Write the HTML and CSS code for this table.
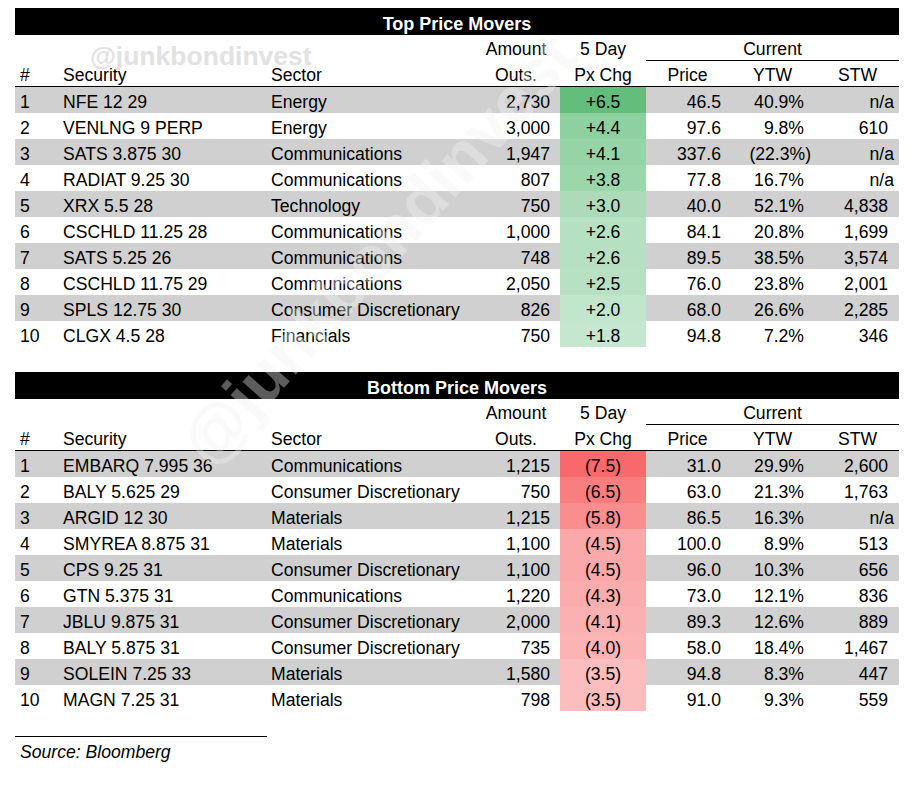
FILE: index.html
```html
<!DOCTYPE html>
<html lang="en">
<head>
<meta charset="utf-8">
<title>Price Movers</title>
<link rel="stylesheet" href="styles.css">
</head>
<body>
<div class="page">
  <section class="movers">
    <div class="title">Top Price Movers</div>
    <div class="row head1">
      <span class="cell ctr col-amt">Amount</span>
      <span class="cell ctr col-chg">5 Day</span>
      <span class="cell ctr col-cur">Current</span>
    </div>
    <div class="row head2">
      <span class="cell txt">#</span>
      <span class="cell txt">Security</span>
      <span class="cell txt">Sector</span>
      <span class="cell ctr">Outs.</span>
      <span class="cell ctr">Px Chg</span>
      <span class="cell ctr">Price</span>
      <span class="cell ctr">YTW</span>
      <span class="cell ctr">STW</span>
    </div>
    <div class="row band"><span class="cell txt">1</span><span class="cell txt">NFE 12 29</span><span class="cell txt">Energy</span><span class="cell amt">2,730</span><span class="cell chg" style="background:#63be7b">+6.5</span><span class="cell px">46.5</span><span class="cell ytw">40.9%</span><span class="cell stw na">n/a</span></div>
    <div class="row"><span class="cell txt">2</span><span class="cell txt">VENLNG 9 PERP</span><span class="cell txt">Energy</span><span class="cell amt">3,000</span><span class="cell chg" style="background:#8fd0a0">+4.4</span><span class="cell px">97.6</span><span class="cell ytw">9.8%</span><span class="cell stw">610</span></div>
    <div class="row band"><span class="cell txt">3</span><span class="cell txt">SATS 3.875 30</span><span class="cell txt">Communications</span><span class="cell amt">1,947</span><span class="cell chg" style="background:#96d3a6">+4.1</span><span class="cell px">337.6</span><span class="cell ytw neg">(22.3%)</span><span class="cell stw na">n/a</span></div>
    <div class="row"><span class="cell txt">4</span><span class="cell txt">RADIAT 9.25 30</span><span class="cell txt">Communications</span><span class="cell amt">807</span><span class="cell chg" style="background:#9cd6ab">+3.8</span><span class="cell px">77.8</span><span class="cell ytw">16.7%</span><span class="cell stw na">n/a</span></div>
    <div class="row band"><span class="cell txt">5</span><span class="cell txt">XRX 5.5 28</span><span class="cell txt">Technology</span><span class="cell amt">750</span><span class="cell chg" style="background:#addbb9">+3.0</span><span class="cell px">40.0</span><span class="cell ytw">52.1%</span><span class="cell stw">4,838</span></div>
    <div class="row"><span class="cell txt">6</span><span class="cell txt">CSCHLD 11.25 28</span><span class="cell txt">Communications</span><span class="cell amt">1,000</span><span class="cell chg" style="background:#b5e0c1">+2.6</span><span class="cell px">84.1</span><span class="cell ytw">20.8%</span><span class="cell stw">1,699</span></div>
    <div class="row band"><span class="cell txt">7</span><span class="cell txt">SATS 5.25 26</span><span class="cell txt">Communications</span><span class="cell amt">748</span><span class="cell chg" style="background:#b5e0c1">+2.6</span><span class="cell px">89.5</span><span class="cell ytw">38.5%</span><span class="cell stw">3,574</span></div>
    <div class="row"><span class="cell txt">8</span><span class="cell txt">CSCHLD 11.75 29</span><span class="cell txt">Communications</span><span class="cell amt">2,050</span><span class="cell chg" style="background:#b7e1c2">+2.5</span><span class="cell px">76.0</span><span class="cell ytw">23.8%</span><span class="cell stw">2,001</span></div>
    <div class="row band"><span class="cell txt">9</span><span class="cell txt">SPLS 12.75 30</span><span class="cell txt">Consumer Discretionary</span><span class="cell amt">826</span><span class="cell chg" style="background:#c2e6cb">+2.0</span><span class="cell px">68.0</span><span class="cell ytw">26.6%</span><span class="cell stw">2,285</span></div>
    <div class="row"><span class="cell txt">10</span><span class="cell txt">CLGX 4.5 28</span><span class="cell txt">Financials</span><span class="cell amt">750</span><span class="cell chg" style="background:#c6e7cf">+1.8</span><span class="cell px">94.8</span><span class="cell ytw">7.2%</span><span class="cell stw">346</span></div>
  </section>

  <section class="movers second">
    <div class="title">Bottom Price Movers</div>
    <div class="row head1">
      <span class="cell ctr col-amt">Amount</span>
      <span class="cell ctr col-chg">5 Day</span>
      <span class="cell ctr col-cur">Current</span>
    </div>
    <div class="row head2">
      <span class="cell txt">#</span>
      <span class="cell txt">Security</span>
      <span class="cell txt">Sector</span>
      <span class="cell ctr">Outs.</span>
      <span class="cell ctr">Px Chg</span>
      <span class="cell ctr">Price</span>
      <span class="cell ctr">YTW</span>
      <span class="cell ctr">STW</span>
    </div>
    <div class="row band"><span class="cell txt">1</span><span class="cell txt">EMBARQ 7.995 36</span><span class="cell txt">Communications</span><span class="cell amt">1,215</span><span class="cell chg" style="background:#f8696b">(7.5)</span><span class="cell px">31.0</span><span class="cell ytw">29.9%</span><span class="cell stw">2,600</span></div>
    <div class="row"><span class="cell txt">2</span><span class="cell txt">BALY 5.625 29</span><span class="cell txt">Consumer Discretionary</span><span class="cell amt">750</span><span class="cell chg" style="background:#f97e80">(6.5)</span><span class="cell px">63.0</span><span class="cell ytw">21.3%</span><span class="cell stw">1,763</span></div>
    <div class="row band"><span class="cell txt">3</span><span class="cell txt">ARGID 12 30</span><span class="cell txt">Materials</span><span class="cell amt">1,215</span><span class="cell chg" style="background:#fa8d8e">(5.8)</span><span class="cell px">86.5</span><span class="cell ytw">16.3%</span><span class="cell stw na">n/a</span></div>
    <div class="row"><span class="cell txt">4</span><span class="cell txt">SMYREA 8.875 31</span><span class="cell txt">Materials</span><span class="cell amt">1,100</span><span class="cell chg" style="background:#faa8a9">(4.5)</span><span class="cell px">100.0</span><span class="cell ytw">8.9%</span><span class="cell stw">513</span></div>
    <div class="row band"><span class="cell txt">5</span><span class="cell txt">CPS 9.25 31</span><span class="cell txt">Consumer Discretionary</span><span class="cell amt">1,100</span><span class="cell chg" style="background:#faa8a9">(4.5)</span><span class="cell px">96.0</span><span class="cell ytw">10.3%</span><span class="cell stw">656</span></div>
    <div class="row"><span class="cell txt">6</span><span class="cell txt">GTN 5.375 31</span><span class="cell txt">Communications</span><span class="cell amt">1,220</span><span class="cell chg" style="background:#fbacad">(4.3)</span><span class="cell px">73.0</span><span class="cell ytw">12.1%</span><span class="cell stw">836</span></div>
    <div class="row band"><span class="cell txt">7</span><span class="cell txt">JBLU 9.875 31</span><span class="cell txt">Consumer Discretionary</span><span class="cell amt">2,000</span><span class="cell chg" style="background:#fbb0b1">(4.1)</span><span class="cell px">89.3</span><span class="cell ytw">12.6%</span><span class="cell stw">889</span></div>
    <div class="row"><span class="cell txt">8</span><span class="cell txt">BALY 5.875 31</span><span class="cell txt">Consumer Discretionary</span><span class="cell amt">735</span><span class="cell chg" style="background:#fbb3b4">(4.0)</span><span class="cell px">58.0</span><span class="cell ytw">18.4%</span><span class="cell stw">1,467</span></div>
    <div class="row band"><span class="cell txt">9</span><span class="cell txt">SOLEIN 7.25 33</span><span class="cell txt">Materials</span><span class="cell amt">1,580</span><span class="cell chg" style="background:#fbbdbe">(3.5)</span><span class="cell px">94.8</span><span class="cell ytw">8.3%</span><span class="cell stw">447</span></div>
    <div class="row"><span class="cell txt">10</span><span class="cell txt">MAGN 7.25 31</span><span class="cell txt">Materials</span><span class="cell amt">798</span><span class="cell chg" style="background:#fbbdbe">(3.5)</span><span class="cell px">91.0</span><span class="cell ytw">9.3%</span><span class="cell stw">559</span></div>
  </section>

  <div class="source">Source: Bloomberg</div>

  <div class="wm-top">@junkbondinvest</div>
  <div class="wm-diag">@junkbondinvest</div>
</div>
</body>
</html>
```

FILE: styles.css
```css
html, body {
  margin: 0;
  padding: 0;
  background: #ffffff;
}

body {
  font-family: "Liberation Sans", Arial, sans-serif;
  font-size: 17.6px;
  color: #000000;
}

.page {
  position: relative;
  width: 884px;
  padding: 8px 16px 0 15px;
}

.movers {
  display: flex;
  flex-direction: column;
}

.movers.second {
  margin-top: 25px;
}

.title {
  height: 27px;
  box-sizing: border-box;
  background: #000000;
  color: #ffffff;
  font-weight: bold;
  font-size: 18px;
  line-height: 20px;
  display: flex;
  align-items: flex-end;
  justify-content: center;
  padding-bottom: 1px;
}

.row {
  display: grid;
  grid-template-columns: 43px 208px 206px 88px 86px 83px 87px 83px;
  height: 26px;
  box-sizing: border-box;
}

.row.band {
  background: #d0d0d0;
}

.cell {
  display: flex;
  align-items: flex-end;
  line-height: 22px;
  white-space: nowrap;
  box-sizing: border-box;
}

.head1 .cell {
  border-bottom: 1px solid transparent;
}

.head1 .col-amt { grid-column: 4; }
.head1 .col-chg { grid-column: 5; }
.head1 .col-cur {
  grid-column: 6 / span 3;
  border-bottom: 1px solid #000000;
}

.head2 {
  border-bottom: 1px solid #000000;
}

.txt {
  padding-left: 5px;
}

.ctr {
  justify-content: center;
}

.amt {
  justify-content: flex-end;
  padding-right: 10px;
}

.chg {
  justify-content: center;
}

.px {
  justify-content: flex-end;
  padding-right: 8px;
}

.ytw {
  justify-content: flex-end;
  padding-right: 12px;
}

.ytw.neg {
  padding-right: 5px;
}

.stw {
  justify-content: flex-end;
  padding-right: 11px;
}

.stw.na {
  padding-right: 5px;
}

.source {
  margin-top: 25px;
  width: 252px;
  height: 27px;
  box-sizing: border-box;
  border-top: 1px solid #000000;
  font-style: italic;
  line-height: 22px;
  display: flex;
  align-items: flex-end;
  padding-left: 5px;
}

.wm-top {
  position: absolute;
  left: 90px;
  top: 43px;
  font-size: 26.5px;
  line-height: 26px;
  font-weight: bold;
  color: #e2e2e2;
  white-space: nowrap;
  pointer-events: none;
}

.wm-diag {
  position: absolute;
  left: 102px;
  top: 216px;
  font-size: 66px;
  line-height: 66px;
  font-weight: bold;
  color: rgba(242, 242, 242, 0.38);
  white-space: nowrap;
  transform: rotate(-48deg);
  transform-origin: center center;
  pointer-events: none;
}
```
